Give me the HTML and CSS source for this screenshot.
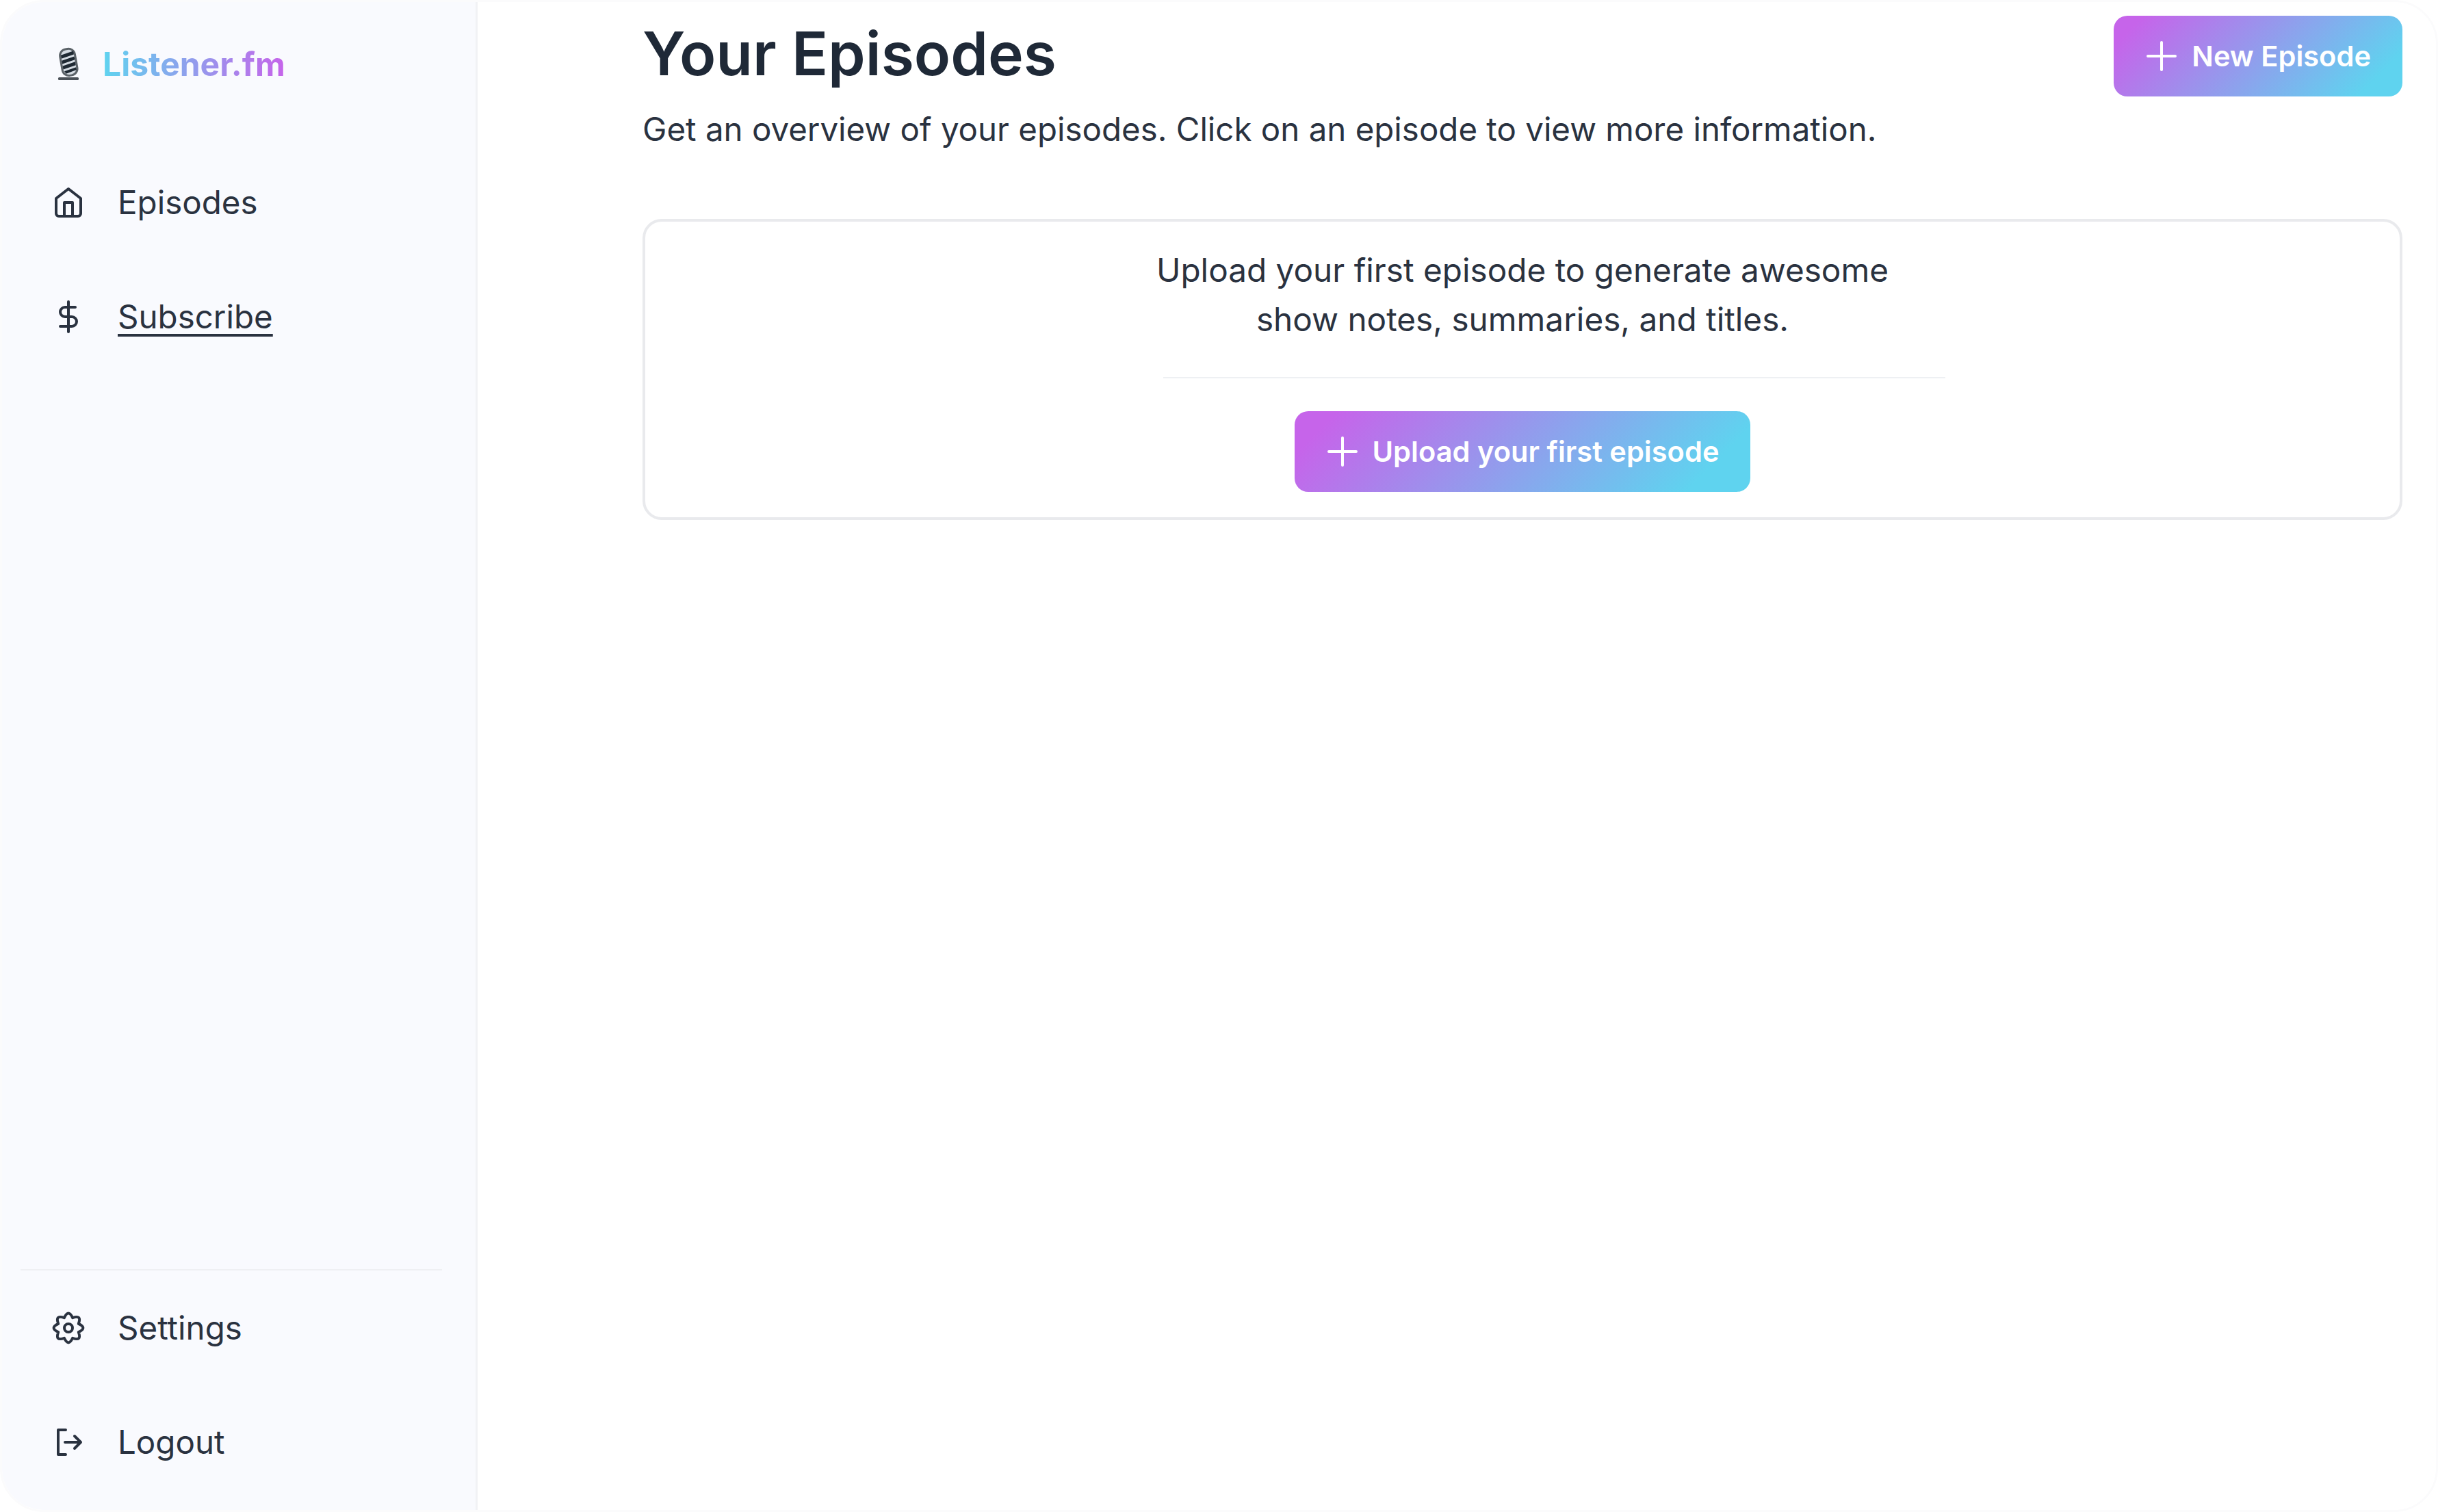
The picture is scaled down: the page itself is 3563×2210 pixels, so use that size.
FILE: index.html
```html
<!DOCTYPE html>
<html lang="en">
<head>
  <meta charset="UTF-8" />
  <title>Listener.fm</title>
  <link rel="stylesheet" href="styles.css">
</head>
<body>
  <div class="app">

    <!-- Sidebar -->
    <aside class="sidebar">
      <div class="brand">
        <svg class="brand-mic" viewBox="0 0 36 50" aria-hidden="true">
          <g transform="rotate(-10 18 24)">
            <rect x="6" y="2" width="25" height="42" rx="11" fill="#5b6268"/>
            <rect x="9" y="5" width="19" height="36" rx="8" fill="#d5dbe2"/>
            <path d="M9 11l19-3v5l-19 3zM9 19l19-3v5l-19 3zM9 27l19-3v5l-19 3zM10 35l18-3v4l-16 3z" fill="#1f2933"/>
          </g>
          <rect x="3" y="45" width="30" height="4" rx="1.5" fill="#4b5158"/>
        </svg>
        <span class="brand-name">Listener.fm</span>
      </div>

      <nav class="nav">
        <a class="nav-item" href="#">
          <svg class="icon" viewBox="0 0 24 24" aria-hidden="true">
            <path d="M3 9l9-7 9 7v11a2 2 0 0 1-2 2H5a2 2 0 0 1-2-2z"></path>
            <polyline points="9 22 9 12 15 12 15 22"></polyline>
          </svg>
          <span>Episodes</span>
        </a>
        <a class="nav-item" href="#">
          <svg class="icon" viewBox="0 0 24 24" aria-hidden="true">
            <line x1="12" y1="1" x2="12" y2="23"></line>
            <path d="M17 5H9.5a3.5 3.5 0 0 0 0 7h5a3.5 3.5 0 0 1 0 7H6"></path>
          </svg>
          <span class="underlined">Subscribe</span>
        </a>
      </nav>

      <div class="nav nav-bottom">
        <a class="nav-item" href="#">
          <svg class="icon" viewBox="0 0 24 24" aria-hidden="true">
            <path d="M19.39 8.94Q26 12 19.39 15.06Q21.9 21.9 15.06 19.39Q12 26 8.94 19.39Q2.1 21.9 4.61 15.06Q-2 12 4.61 8.94Q2.1 2.1 8.94 4.61Q12 -2 15.06 4.61Q21.9 2.1 19.39 8.94z"></path>
            <circle cx="12" cy="12" r="3"></circle>
          </svg>
          <span>Settings</span>
        </a>
        <a class="nav-item" href="#">
          <svg class="icon" viewBox="0 0 24 24" aria-hidden="true">
            <path d="M10 3H4.5v18H10"></path>
            <path d="M9.5 12H21M16.5 7.5L21 12l-4.5 4.5"></path>
          </svg>
          <span>Logout</span>
        </a>
      </div>
    </aside>

    <!-- Main content -->
    <main class="main">
      <header class="page-head">
        <div>
          <h1 class="page-title">Your Episodes</h1>
          <p class="page-sub">Get an overview of your episodes. Click on an episode to view more information.</p>
        </div>
        <button class="grad-btn" type="button">
          <svg class="plus" viewBox="0 0 24 24" aria-hidden="true"><path d="M12 2v20M2 12h20"></path></svg>
          New Episode
        </button>
      </header>

      <section class="empty-card">
        <p class="empty-text">Upload your first episode to generate awesome<br>show notes, summaries, and titles.</p>
        <div class="empty-rule"></div>
        <button class="grad-btn" type="button">
          <svg class="plus" viewBox="0 0 24 24" aria-hidden="true"><path d="M12 2v20M2 12h20"></path></svg>
          Upload your first episode
        </button>
      </section>
    </main>

  </div>
</body>
</html>
```

FILE: styles.css
```css
/* Reset */
* {
  margin: 0;
  padding: 0;
  box-sizing: border-box;
  font-family: 'Inter', 'Liberation Sans', sans-serif;
}

html, body {
  width: 3563px;
  height: 2210px;
  overflow: hidden;
  background: #ffffff;
  color: #2a3240;
}

.app {
  display: flex;
  width: 100%;
  height: 100%;
  border: 3px solid #fbfbfc;
  border-radius: 64px;
  overflow: hidden;
}

/* Sidebar */
.sidebar {
  display: flex;
  flex-direction: column;
  width: 695px;
  flex-shrink: 0;
  padding: 0 49px 0 27px;
  background: #f9fafe;
  border-right: 3px solid #f1f2f5;
}

.brand {
  display: flex;
  align-items: center;
  gap: 32px;
  height: 180px;
  padding-left: 52px;
  margin-bottom: 29px;
}

.brand-mic {
  width: 36px;
  height: 50px;
  flex-shrink: 0;
}

.brand-name {
  font-size: 48px;
  font-weight: 700;
  background: linear-gradient(to right, #5fd3ef, #c664ea);
  -webkit-background-clip: text;
  background-clip: text;
  color: transparent;
}

.nav {
  display: flex;
  flex-direction: column;
}

.nav-bottom {
  margin-top: auto;
  padding-bottom: 16px;
  border-top: 2px solid #eff0f3;
}

.nav-item {
  display: flex;
  align-items: center;
  gap: 48px;
  height: 167px;
  padding-left: 46px;
  font-size: 47.5px;
  color: #2a3240;
  text-decoration: none;
}

.underlined {
  text-decoration: underline;
  text-decoration-thickness: 4px;
  text-underline-offset: 8px;
}

.icon {
  width: 48px;
  height: 48px;
  flex-shrink: 0;
  fill: none;
  stroke: #2a3240;
  stroke-width: 2;
  stroke-linecap: round;
  stroke-linejoin: round;
  overflow: visible;
}

/* Main column */
.main {
  flex: 1;
  padding: 20px 49px 0 241px;
}

.page-head {
  display: flex;
  justify-content: space-between;
  align-items: flex-start;
}

.page-title {
  font-size: 87.7px;
  line-height: 110px;
  font-weight: 600;
  color: #1f2937;
}

.page-sub {
  margin-top: 20px;
  font-size: 47.45px;
  line-height: 72px;
}

.grad-btn {
  display: inline-flex;
  align-items: center;
  gap: 20px;
  height: 118px;
  padding: 0 46px;
  border: 0;
  border-radius: 20px;
  background: linear-gradient(135deg, #c664ea 8%, #5fd3ef 88%);
  color: #ffffff;
  font-size: 41.6px;
  font-weight: 600;
}

.plus {
  width: 48px;
  height: 48px;
  fill: none;
  stroke: #ffffff;
  stroke-width: 2;
  stroke-linecap: round;
}

/* Empty state card */
.empty-card {
  display: flex;
  flex-direction: column;
  align-items: center;
  height: 440px;
  margin-top: 95px;
  padding-top: 35px;
  background: #ffffff;
  border: 4px solid #e9eaed;
  border-radius: 28px;
}

.empty-text {
  font-size: 47.7px;
  line-height: 72px;
  text-align: center;
}

.empty-rule {
  width: 1143px;
  height: 2px;
  margin: 48px 0 48px 92px;
  background: #eef0f3;
}
```
